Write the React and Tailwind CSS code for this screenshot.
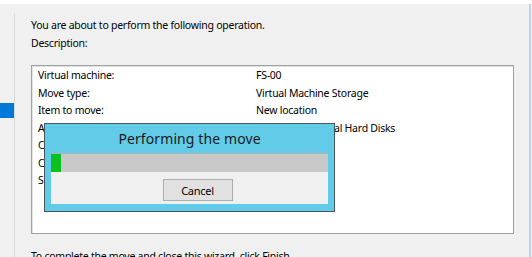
import React from 'react';

const rows = [
  ['Virtual machine:', 'FS-00'],
  ['Move type:', 'Virtual Machine Storage'],
  ['Item to move:', 'New location'],
  ['Additional items:', 'All files and Virtual Hard Disks'],
  ['Configuration location:', 'D:\\VMs'],
  ['Checkpoint location:', 'D:\\VMs'],
  ['Smart Paging location:', 'D:\\VMs'],
];

function ProgressDialog() {
  return (
    <div className="absolute left-[44px] top-[123px] w-[291px] h-[89px] bg-[#62cbe8] border border-[#46575e] px-[6px]">
      <div className="h-[29px] flex items-center justify-center text-[14px] tracking-[0.1px] text-[#1a1a1a]">
        Performing the move
      </div>
      <div className="h-[19px] bg-[#c8c8c8] border-t border-[#b0b0b0]">
        <div className="w-[10px] h-full bg-[#0ac21f]" />
      </div>
      <div className="h-[32px] bg-[#f0f0f0] flex justify-center pt-[7px] pl-[16px]">
        <button className="w-[70px] h-[22px] bg-[#e1e1e1] border border-[#adadad] text-[11px] leading-none text-black">
          Cancel
        </button>
      </div>
    </div>
  );
}

export default function App() {
  return (
    <div className="relative w-[532px] h-[257px] overflow-hidden bg-[#f0f0f0] font-['Noto_Sans',sans-serif] text-[10.5px] tracking-[-0.25px] text-black">
      <div className="h-[4px] bg-white" />
      <div className="flex h-[253px]">
        <div className="w-[14px] pt-[99px]">
          <div className="h-[15px] bg-[#0078d7]" />
        </div>
        <div className="w-px mt-[9px] bg-[#dadada]" />
        <div className="flex-1 pl-[16px] pt-[14px]">
          <div className="leading-[14px]">You are about to perform the following operation.</div>
          <div className="mt-[4px] leading-[14px]">Description:</div>
          <div className="mt-[15px] w-[483px] h-[169px] bg-white border border-[#a0a0a0] shadow-[inset_1px_1px_0_#e3e3e3] pl-[6px] pt-px">
            {rows.map(([label, value]) => (
              <div key={label} className="flex leading-[17.5px] whitespace-nowrap">
                <span className="w-[218px]">{label}</span>
                <span>{value}</span>
              </div>
            ))}
          </div>
          <div className="mt-[15px] leading-[14px]">To complete the move and close this wizard, click Finish.</div>
        </div>
        <div className="w-[2px] mr-px bg-[#bcd3e6]" />
      </div>
      <ProgressDialog />
    </div>
  );
}
